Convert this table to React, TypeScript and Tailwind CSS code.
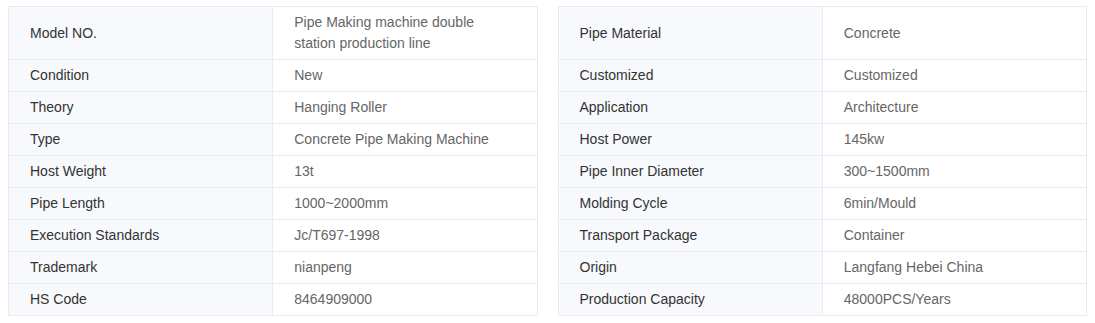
const left: [string, string][] = [
  ['Model NO.', 'Pipe Making machine double station production line'],
  ['Condition', 'New'],
  ['Theory', 'Hanging Roller'],
  ['Type', 'Concrete Pipe Making Machine'],
  ['Host Weight', '13t'],
  ['Pipe Length', '1000~2000mm'],
  ['Execution Standards', 'Jc/T697-1998'],
  ['Trademark', 'nianpeng'],
  ['HS Code', '8464909000'],
];

const right: [string, string][] = [
  ['Pipe Material', 'Concrete'],
  ['Customized', 'Customized'],
  ['Application', 'Architecture'],
  ['Host Power', '145kw'],
  ['Pipe Inner Diameter', '300~1500mm'],
  ['Molding Cycle', '6min/Mould'],
  ['Transport Package', 'Container'],
  ['Origin', 'Langfang Hebei China'],
  ['Production Capacity', '48000PCS/Years'],
];

function SpecTable({ rows }: { rows: [string, string][] }) {
  return (
    <table className="flex-1 table-fixed border-collapse border border-[#e8ecf1]">
      <tbody>
        {rows.map(([k, v], i) => (
          <tr key={i} className="border-b border-[#e8ecf1]">
            <td className={`w-1/2 bg-[#f7f9fc] border-r border-[#e8ecf1] px-[21px] py-[5px] text-[#333] align-middle ${i === 0 ? 'h-[53px]' : 'h-[32px]'}`}>
              {k}
            </td>
            <td className="w-1/2 bg-white px-[21px] py-[5px] text-[#666] align-middle">{v}</td>
          </tr>
        ))}
      </tbody>
    </table>
  );
}

export default function App() {
  return (
    <div className="w-[1095px] h-[323px] bg-white pt-[6px] px-2 text-[14px] leading-[21px]" style={{ fontFamily: '"Liberation Sans", Arial, sans-serif' }}>
      <div className="flex gap-5 items-start">
        <SpecTable rows={left} />
        <SpecTable rows={right} />
      </div>
    </div>
  );
}
